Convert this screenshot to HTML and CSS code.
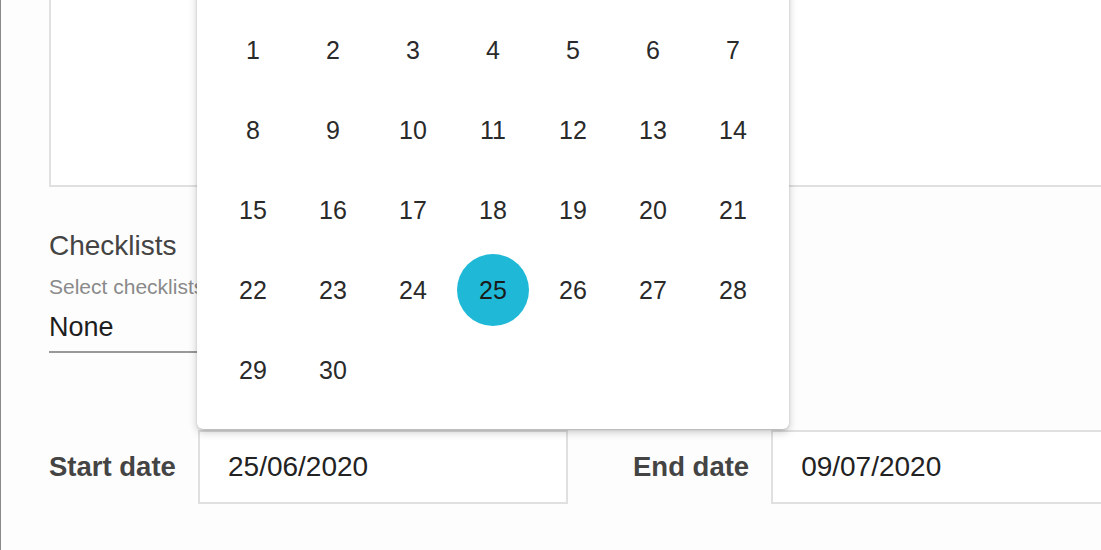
FILE: index.html
```html
<!DOCTYPE html>
<html lang="en">
<head>
<meta charset="utf-8">
<title>Task form</title>
<link rel="stylesheet" href="styles.css">
</head>
<body>
<div class="page">
  <div class="form">
    <div class="textarea-box"></div>

    <section class="checklists">
      <h2 class="section-title">Checklists</h2>
      <div class="select-label">Select checklists</div>
      <div class="select-value">None</div>
    </section>

    <div class="date-row">
      <label class="date-label">Start date</label>
      <div class="date-field">
        <div class="date-input">25/06/2020</div>
        <div class="calendar">
          <div class="cal-grid">
            <span class="day">1</span><span class="day">2</span><span class="day">3</span><span class="day">4</span><span class="day">5</span><span class="day">6</span><span class="day">7</span>
            <span class="day">8</span><span class="day">9</span><span class="day">10</span><span class="day">11</span><span class="day">12</span><span class="day">13</span><span class="day">14</span>
            <span class="day">15</span><span class="day">16</span><span class="day">17</span><span class="day">18</span><span class="day">19</span><span class="day">20</span><span class="day">21</span>
            <span class="day">22</span><span class="day">23</span><span class="day">24</span><span class="day selected">25</span><span class="day">26</span><span class="day">27</span><span class="day">28</span>
            <span class="day">29</span><span class="day">30</span>
          </div>
        </div>
      </div>
      <label class="date-label end">End date</label>
      <div class="date-field">
        <div class="date-input">09/07/2020</div>
      </div>
    </div>
  </div>
</div>
</body>
</html>
```

FILE: styles.css
```css
html, body {
  margin: 0;
  padding: 0;
  height: 100%;
  overflow: hidden;
  background: #fdfdfd;
  font-family: "Liberation Sans", Arial, Helvetica, sans-serif;
}

.page {
  border-left: 1px solid #8a8a8a;
  height: 550px;
  overflow: hidden;
}

.form {
  width: 1200px;
  padding-left: 48px;
  margin-top: -60px;
}

.textarea-box {
  height: 243px;
  border: 2px solid #e0e0e0;
  background: #fff;
}

.checklists {
  margin-top: 43px;
  width: 320px;
}

.section-title {
  margin: 0;
  font-size: 28px;
  line-height: 32px;
  font-weight: normal;
  color: #444;
}

.select-label {
  margin-top: 13px;
  font-size: 21px;
  line-height: 24px;
  color: #8a8a8a;
  white-space: nowrap;
}

.select-value {
  margin-top: 12px;
  font-size: 27px;
  line-height: 32px;
  color: #1e1e1e;
  padding-bottom: 8px;
  border-bottom: 2px solid #999;
}

.date-row {
  margin-top: 77px;
  display: flex;
  align-items: center;
}

.date-label {
  font-size: 27.5px;
  font-weight: bold;
  color: #444;
  margin-right: 22px;
  width: 127px;
  white-space: nowrap;
}

.date-label.end {
  width: auto;
  margin-left: 65px;
}

.date-field {
  position: relative;
}

.date-input {
  box-sizing: border-box;
  width: 370px;
  height: 74px;
  border: 2px solid #e0e0e0;
  background: #fff;
  padding-left: 28px;
  display: flex;
  align-items: center;
  font-size: 28px;
  color: #222;
}

.calendar {
  position: absolute;
  left: -1px;
  bottom: calc(100% + 1px);
  width: 592px;
  box-sizing: border-box;
  padding: 110px 16px 19px;
  background: #fff;
  border-radius: 0 0 6px 6px;
  box-shadow: 0 3px 8px rgba(0, 0, 0, 0.22), 0 1px 2px rgba(0, 0, 0, 0.15);
  z-index: 5;
}

.cal-grid {
  display: grid;
  grid-template-columns: repeat(7, 80px);
  grid-auto-rows: 80px;
}

.day {
  display: flex;
  align-items: center;
  justify-content: center;
  font-size: 25px;
  color: #2a2a2a;
}

.day.selected {
  width: 72px;
  height: 72px;
  margin: 4px;
  border-radius: 50%;
  background: #1fb9d7;
  color: #1a1a1a;
}
```
